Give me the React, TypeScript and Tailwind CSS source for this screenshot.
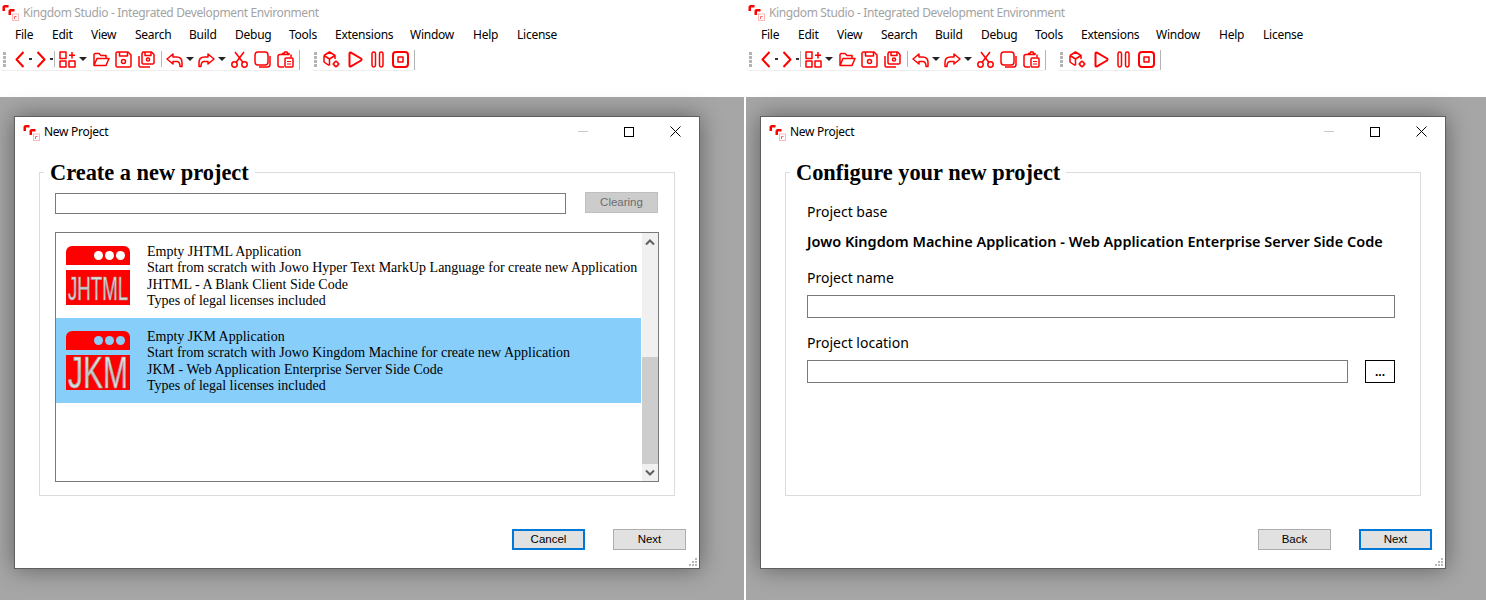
import type { ReactNode } from "react";

const ui = "font-['Noto_Sans','Open_Sans',sans-serif]";
const serif = "font-['Liberation_Serif',serif]";

const Logo = () => (
  <svg width="17" height="17" viewBox="0 0 17 17" className="shrink-0">
    <path d="M0.5 7V2.5L2 1H6.5V3.5H3V7Z" fill="#ff0000" />
    <path d="M6.5 11V6.5L8 5H12.5V7.5H9V11Z" fill="#ff0000" />
    <rect x="10.5" y="10" width="6" height="6.5" fill="none" stroke="#ffb8b8" />
    <path d="M12.5 15V12.5H14.5" fill="none" stroke="#ff6060" />
  </svg>
);

const Icon = ({ w = 17, ml, children }: { w?: number; ml: string; children: ReactNode }) => (
  <svg
    width={w}
    height="17"
    viewBox={`0 0 ${w} 17`}
    fill="none"
    stroke="#ff0000"
    strokeWidth="1.5"
    strokeLinejoin="round"
    className={`shrink-0 ${ml}`}
  >
    {children}
  </svg>
);

const Grip = ({ ml }: { ml: string }) => (
  <div className={`flex flex-col gap-[1px] shrink-0 ${ml}`}>
    {[0, 1, 2, 3].map((i) => (
      <div key={i} className="w-[3px] h-[3px] bg-[#b4b4b4]" />
    ))}
  </div>
);

const Sep = ({ ml }: { ml: string }) => (
  <div className={`w-[1px] h-[16px] bg-[#b8b8b8] shrink-0 ${ml}`} />
);

const Caret = ({ ml }: { ml: string }) => (
  <div className={`w-0 h-0 shrink-0 border-l-[4px] border-r-[4px] border-t-[4px] border-l-transparent border-r-transparent border-t-[#222] ${ml}`} />
);

const Dot = ({ ml }: { ml: string }) => (
  <div className={`w-[3px] h-[2px] bg-[#333] shrink-0 ${ml}`} />
);

function Toolbars() {
  return (
    <div className="flex mt-[4px] h-[23px]">
      <div className="flex items-center w-[300px] h-[23px] rounded-[4px] border-b border-[#eeeeee] relative">
        <Grip ml="ml-[3px]" />
        <Icon w={10} ml="ml-[9px]">
          <path d="M8.5 1L1.5 8.5L8.5 16" strokeWidth="2" />
        </Icon>
        <Dot ml="ml-[4px]" />
        <Icon w={10} ml="ml-[4px]">
          <path d="M1.5 1L8.5 8.5L1.5 16" strokeWidth="2" />
        </Icon>
        <Dot ml="ml-[4px]" />
        <Sep ml="ml-[1px]" />
        <Icon ml="ml-[4px]">
          <rect x="1" y="1" width="6" height="6.5" />
          <rect x="1" y="10" width="6" height="6" />
          <rect x="10" y="10" width="6" height="6" />
          <path d="M13 1V7.5M10 4.2H16" />
        </Icon>
        <Caret ml="ml-[3px]" />
        <Icon ml="ml-[6px]">
          <path d="M1 14V3.5L2 2.5H6L8 4.5H13V7M1 14.5L4 7.5H16L13 14.5H1Z" />
        </Icon>
        <Icon ml="ml-[5px]">
          <path d="M1 2L2 1H13L16 4V15L15 16H2L1 15Z" />
          <path d="M4.5 1V5H12.5V1" />
          <circle cx="8.5" cy="10.5" r="2" />
        </Icon>
        <Icon ml="ml-[6px]">
          <path d="M4 2.5L5 1H13.5L16 3.5V12L15 13H5L4 12Z" />
          <path d="M7 1V4.5H13V1" />
          <circle cx="10" cy="8.5" r="1.6" />
          <path d="M1 5V15L2 16H12" />
        </Icon>
        <Sep ml="ml-[6px]" />
        <Icon ml="ml-[4px]">
          <path d="M7 3L1 8L7 13V10.5H11Q13.5 10.5 14 14.5V15.5H16V11.5Q16 6 10.5 6H7Z" />
        </Icon>
        <Caret ml="ml-[3px]" />
        <Icon ml="ml-[4px]">
          <path d="M10 3L16 8L10 13V10.5H6Q3.5 10.5 3 14.5V15.5H1V11.5Q1 6 6.5 6H10Z" />
        </Icon>
        <Caret ml="ml-[3px]" />
        <Icon ml="ml-[5px]">
          <circle cx="3.5" cy="13.5" r="2.7" />
          <circle cx="13.5" cy="13.5" r="2.7" />
          <path d="M5.2 11.3L13 1M11.8 11.3L4 1" />
        </Icon>
        <Icon ml="ml-[6px]">
          <rect x="1" y="1" width="13" height="13" rx="3" />
          <path d="M16 5V13.5Q16 16 13.5 16H5" />
        </Icon>
        <Icon ml="ml-[6px]">
          <path d="M7 3.5H3Q1 3.5 1 5.5V14Q1 16 3 16H7M5.5 3.5V2.5H7L7.5 1H10L10.5 2.5H12V3.5Z" />
          <path d="M14 3.5V6.5" />
          <rect x="8" y="7" width="8" height="9" rx="1" />
          <path d="M10 10.5H14M10 13H14" strokeWidth="1" />
        </Icon>
        <div className="absolute right-0 top-[2px] w-[1px] h-[20px] bg-[#b4b4b4]" />
      </div>
      <div className="flex items-center ml-[11px] w-[104px] h-[23px] rounded-[4px] border-b border-[#eeeeee] relative">
        <Grip ml="ml-[3px]" />
        <Icon ml="ml-[6px]">
          <path d="M1 4.5L6.5 1L12 4.5V8M1 4.5V11L6 14.5M1 4.5L6.5 8V14.5M6.5 8L12 4.5" />
          <circle cx="13" cy="13" r="2.2" />
          <path d="M13 9.5V10.7M13 15.3V16.5M9.5 13H10.7M15.3 13H16.5" />
        </Icon>
        <Icon ml="ml-[8px]" w={15}>
          <path d="M1.5 2.5Q1.5 1 3 1.7L13 7.5Q14 8.5 13 9.5L3 15.3Q1.5 16 1.5 14.5Z" strokeWidth="2" />
        </Icon>
        <Icon ml="ml-[8px]" w={13}>
          <rect x="1" y="1" width="3.5" height="15" rx="1.7" />
          <rect x="8.5" y="1" width="3.5" height="15" rx="1.7" />
        </Icon>
        <Icon ml="ml-[8px]">
          <rect x="1" y="1" width="15" height="15" rx="3" strokeWidth="2" />
          <rect x="6" y="6" width="5" height="5" />
        </Icon>
        <div className="absolute right-0 top-[2px] w-[1px] h-[20px] bg-[#b4b4b4]" />
      </div>
    </div>
  );
}

function Studio() {
  return (
    <div className={`h-[97px] bg-white ${ui}`}>
      <div className="flex items-center h-[24px] pl-[2px] pt-[1px]">
        <Logo />
        <span className="ml-[4px] text-[12px] tracking-[-0.37px] text-[#a3a3a3] whitespace-nowrap">
          Kingdom Studio - Integrated Development Environment
        </span>
      </div>
      <div className="flex items-center h-[20px] pt-[2px] pl-[15px] text-[12px] tracking-[-0.25px] text-black">
        <span className="w-[37px]">File</span>
        <span className="w-[39px]">Edit</span>
        <span className="w-[44px]">View</span>
        <span className="w-[54px]">Search</span>
        <span className="w-[46px]">Build</span>
        <span className="w-[54px]">Debug</span>
        <span className="w-[46px]">Tools</span>
        <span className="w-[75px]">Extensions</span>
        <span className="w-[63px]">Window</span>
        <span className="w-[44px]">Help</span>
        <span>License</span>
      </div>
      <Toolbars />
    </div>
  );
}

function WinButton({ label, focus }: { label: string; focus?: boolean }) {
  return (
    <button
      className={`w-[73px] h-[21px] pt-[1px] bg-[#e1e1e1] text-[11.5px] text-black flex items-center justify-center font-['Liberation_Sans',sans-serif] ${
        focus ? "border-2 border-[#0078d7]" : "border border-[#adadad]"
      }`}
    >
      {label}
    </button>
  );
}

function ResizeGrip() {
  return (
    <svg width="8" height="8" viewBox="0 0 8 8" fill="#b8b8b8" className="absolute right-[2px] bottom-[2px]">
      <rect x="6" y="0" width="2" height="2" />
      <rect x="3" y="3" width="2" height="2" />
      <rect x="6" y="3" width="2" height="2" />
      <rect x="0" y="6" width="2" height="2" />
      <rect x="3" y="6" width="2" height="2" />
      <rect x="6" y="6" width="2" height="2" />
    </svg>
  );
}

function ProjectWindow({ legend, buttons, children }: { legend: string; buttons: ReactNode; children: ReactNode }) {
  return (
    <div className="relative ml-[14px] mt-[19px] w-[686px] h-[453px] bg-white border border-[#5f5f5f] shadow-[0_0_22px_rgba(0,0,0,0.42)]">
      <div className={`flex items-center h-[29px] pl-[8px] pt-[1px] ${ui}`}>
        <Logo />
        <span className="ml-[4px] text-[12px] tracking-[-0.28px] text-black">New Project</span>
        <div className="ml-auto flex items-center pr-[18px] pb-[1px]">
          <div className="w-[10px] h-[1px] bg-[#c8c8c8]" />
          <div className="ml-[36px] w-[10px] h-[10px] border border-black" />
          <svg width="11" height="11" viewBox="0 0 11 11" stroke="#000" className="ml-[36px]">
            <path d="M0.5 0.5L10.5 10.5M10.5 0.5L0.5 10.5" />
          </svg>
        </div>
      </div>
      <div className="relative ml-[24px] mt-[26px] w-[636px] h-[324px] border border-[#dcdcdc]">
        <div className={`absolute left-[4px] top-[-13px] px-[6px] bg-white text-[22.4px] leading-[26px] font-bold text-black whitespace-nowrap ${serif}`}>
          {legend}
        </div>
        {children}
      </div>
      <div className="flex justify-end mt-[33px] mr-[13px]">{buttons}</div>
      <ResizeGrip />
    </div>
  );
}

function TemplateIcon({
  label,
  dots,
  fontSize,
  baseline,
}: {
  label: string;
  dots: string;
  fontSize: number;
  baseline: number;
}) {
  return (
    <div className="w-[64px] shrink-0">
      <div className="h-[19px] bg-[#ff0000] rounded-t-[6px] flex items-center justify-end gap-[2px] pr-[5px]">
        <div className={`w-[9px] h-[9px] rounded-full ${dots}`} />
        <div className={`w-[9px] h-[9px] rounded-full ${dots}`} />
        <div className={`w-[9px] h-[9px] rounded-full ${dots}`} />
      </div>
      <svg width="64" height="35" viewBox="0 0 64 35" className="mt-[5px] block overflow-visible">
        <defs>
          <linearGradient id={`g-${label}`} x1="0" x2="0" y1="0" y2="1">
            <stop offset="0" stopColor="#f4f4f4" />
            <stop offset="0.55" stopColor="#c4c4c4" />
            <stop offset="1" stopColor="#efefef" />
          </linearGradient>
        </defs>
        <rect width="64" height="35" fill="#ff0000" />
        <text
          x="2"
          y={baseline}
          textLength="60"
          lengthAdjust="spacingAndGlyphs"
          fontFamily="Liberation Sans, sans-serif"
          fontSize={fontSize}
          stroke="#9a9a9a"
          strokeWidth="0.7"
          fill={`url(#g-${label})`}
        >
          {label}
        </text>
      </svg>
    </div>
  );
}

function TemplateRow({
  icon,
  lines,
  selected,
}: {
  icon: ReactNode;
  lines: string[];
  selected?: boolean;
}) {
  return (
    <div className={`flex items-center w-[585px] h-[85px] pl-[10px] ${selected ? "bg-[#87cefa]" : "bg-white"}`}>
      {icon}
      <div className={`ml-[17px] pt-[2px] text-[14px] leading-[16.3px] text-black whitespace-nowrap ${serif}`}>
        {lines.map((l) => (
          <div key={l}>{l}</div>
        ))}
      </div>
    </div>
  );
}

function CreatePanel() {
  return (
    <div className="pl-[15px] pt-[19px]">
      <div className="flex">
        <div className="w-[511px] h-[21px] border border-[#7a7a7a] bg-white mt-[1px]" />
        <div className="ml-[19px] w-[73px] h-[21px] bg-[#cccccc] border border-[#bfbfbf] text-[11.5px] text-[#6d6d6d] flex items-center justify-center font-['Liberation_Sans',sans-serif]">
          Clearing
        </div>
      </div>
      <div className="flex mt-[18px] w-[604px] h-[250px] border border-[#7a7a7a] bg-white">
        <div className="w-[585px]">
          <TemplateRow
            icon={<TemplateIcon label="JHTML" dots="bg-white" fontSize={34} baseline={30} />}
            lines={[
              "Empty JHTML Application",
              "Start from scratch with Jowo Hyper Text MarkUp Language for create new Application",
              "JHTML - A Blank Client Side Code",
              "Types of legal licenses included",
            ]}
          />
          <TemplateRow
            selected
            icon={<TemplateIcon label="JKM" dots="bg-[#87cefa]" fontSize={44} baseline={33} />}
            lines={[
              "Empty JKM Application",
              "Start from scratch with Jowo Kingdom Machine for create new Application",
              "JKM - Web Application Enterprise Server Side Code",
              "Types of legal licenses included",
            ]}
          />
        </div>
        <div className="ml-[1px] w-[16px] h-full bg-[#f0f0f0] flex flex-col items-center">
          <svg width="10" height="7" viewBox="0 0 10 7" fill="none" stroke="#606060" strokeWidth="2" className="mt-[6px]">
            <path d="M1 5.5L5 1.5L9 5.5" />
          </svg>
          <div className="mt-[111px] w-full h-[107px] bg-[#cdcdcd]" />
          <svg width="10" height="7" viewBox="0 0 10 7" fill="none" stroke="#606060" strokeWidth="2" className="mt-[5px]">
            <path d="M1 1.5L5 5.5L9 1.5" />
          </svg>
        </div>
      </div>
    </div>
  );
}

function ConfigurePanel() {
  return (
    <div className={`pl-[21px] pt-[29px] text-[14px] leading-[20px] text-black ${ui}`}>
      <div>Project base</div>
      <div className="mt-[9px] text-[14.5px] font-semibold whitespace-nowrap">
        Jowo Kingdom Machine Application - Web Application Enterprise Server Side Code
      </div>
      <div className="mt-[17px]">Project name</div>
      <div className="mt-[7px] w-[588px] h-[23px] border border-[#7a7a7a]" />
      <div className="mt-[15px]">Project location</div>
      <div className="flex mt-[7px]">
        <div className="w-[541px] h-[23px] border border-[#7a7a7a]" />
        <div className="ml-[17px] w-[30px] h-[23px] border border-black flex items-center justify-center text-[12px] font-bold font-['Liberation_Sans',sans-serif]">
          ...
        </div>
      </div>
    </div>
  );
}

export default function App() {
  return (
    <div className="flex w-[1486px] h-[600px] overflow-hidden bg-white gap-[2px]">
      <div className="w-[744px] h-[600px] bg-[#a6a6a6] overflow-hidden">
        <Studio />
        <ProjectWindow
          legend="Create a new project"
          buttons={
            <>
              <WinButton label="Cancel" focus />
              <div className="w-[28px]" />
              <WinButton label="Next" />
            </>
          }
        >
          <CreatePanel />
        </ProjectWindow>
      </div>
      <div className="w-[740px] h-[600px] bg-[#a6a6a6] overflow-hidden">
        <Studio />
        <ProjectWindow
          legend="Configure your new project"
          buttons={
            <>
              <WinButton label="Back" />
              <div className="w-[28px]" />
              <WinButton label="Next" focus />
            </>
          }
        >
          <ConfigurePanel />
        </ProjectWindow>
      </div>
    </div>
  );
}
